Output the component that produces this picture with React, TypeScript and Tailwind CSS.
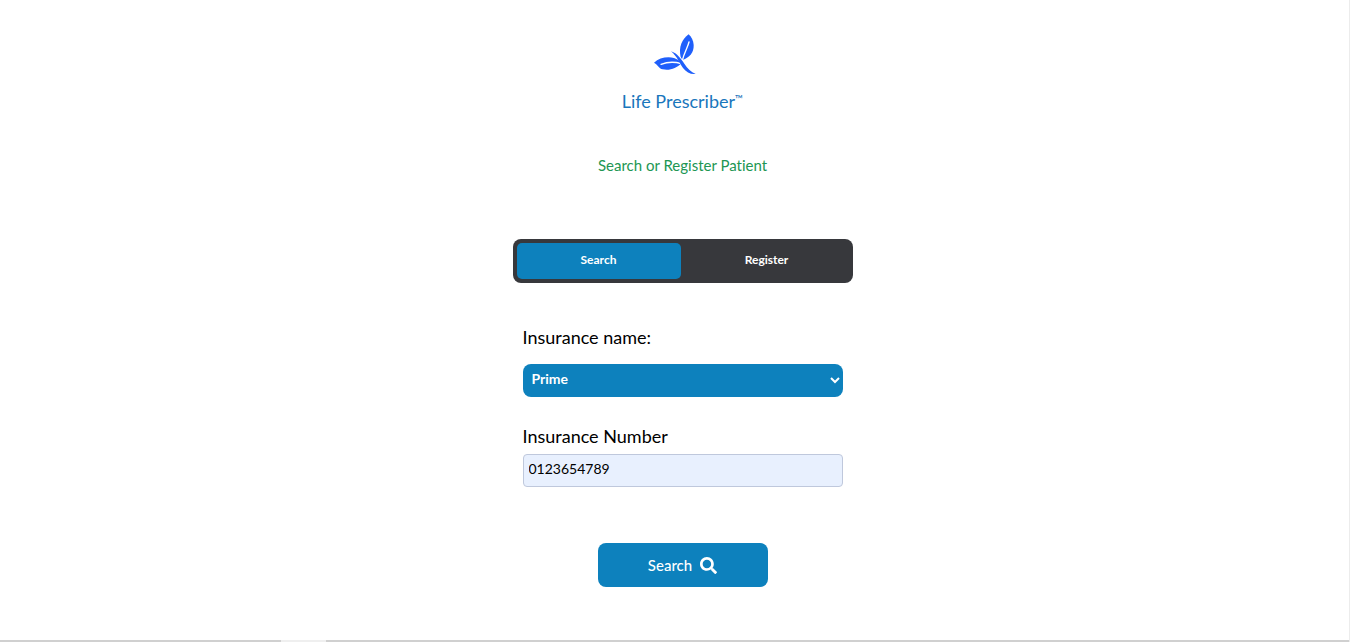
import { useState } from "react";
import { FaSearch } from "react-icons/fa";

function LeafLogo() {
  return (
    <svg viewBox="33 18 174 126" className="h-[42px] w-[58px]" role="img" aria-label="Life Prescriber">
      <g fill="#1f5ffb">
        <path d="M137 19C117 34 106 57 113 87L118 96C141 87 153 73 152 50C151 38 146 27 137 19Z" />
        <path d="M33 104C48 90 72 85 93 90C103 93 110 98 115 106C101 121 79 129 59 124C47 121 43 108 33 104Z" />
      </g>
      <g fill="none" stroke="#ffffff" strokeLinecap="round">
        <path d="M138 42C134 59 124 72 118 97" strokeWidth="4" />
        <path d="M54 109C75 101 95 101 115 107" strokeWidth="4" />
        <path d="M94 76C106 84 115 98 122 107" strokeWidth="8" />
      </g>
      <path
        fill="#1f5ffb"
        d="M84 70C103 76 114 93 124 107C134 122 144 132 158 138C143 140 130 132 120 120C109 105 103 86 84 70Z"
      />
    </svg>
  );
}

const tabs = ["Search", "Register"];

export default function App() {
  const [tab, setTab] = useState("Search");
  const [number, setNumber] = useState("0123654789");

  return (
    <div className="flex min-h-screen flex-col border-r border-[#ececec] bg-white font-['Lato',sans-serif] text-black [font-variant-ligatures:none]">
      <main className="flex flex-1 flex-col items-center pt-[34px] pb-12 pl-4">
        <LeafLogo />
        <h1 className="mt-[11px] flex items-start text-lg leading-7 text-[#1976bc]">
          Life Prescriber<span className="text-[11px] leading-6">™</span>
        </h1>
        <p className="mt-10 text-[15px] leading-5 text-[#219653]">Search or Register Patient</p>

        <div role="tablist" className="mt-16 flex h-11 w-full max-w-[340px] gap-1 rounded-lg bg-[#37383c] p-1">
          {tabs.map((name) => (
            <button
              key={name}
              type="button"
              role="tab"
              aria-selected={tab === name}
              onClick={() => setTab(name)}
              className={
                tab === name
                  ? "flex-1 rounded-[5px] bg-[#0d81bd] pb-0.5 text-xs font-bold text-white"
                  : "flex-1 rounded-[5px] pb-0.5 text-xs font-bold text-white"
              }
            >
              {name}
            </button>
          ))}
        </div>

        <form className="mt-[42px] flex w-full max-w-[320px] flex-col" onSubmit={(e) => e.preventDefault()}>
          <label htmlFor="insurance" className="text-lg leading-6">
            Insurance name:
          </label>
          <select
            id="insurance"
            className="mt-[15px] h-[33px] rounded-lg bg-[#0d81bd] px-[5px] pb-1 text-sm font-bold text-white"
          >
            <option>Prime</option>
          </select>
          <label htmlFor="number" className="mt-[27px] text-lg leading-6">
            Insurance Number
          </label>
          <input
            id="number"
            type="text"
            value={number}
            onChange={(e) => setNumber(e.target.value)}
            className="mt-1.5 h-[33px] rounded border border-[#bfc8dc] bg-[#e8f0fe] px-[5px] pb-1 text-sm"
          />
          <button
            type="submit"
            className="mt-14 flex h-11 w-[170px] items-center justify-center gap-2 self-center rounded-lg bg-[#0d81bd] text-[15px] font-medium text-white"
          >
            Search
            <FaSearch className="size-[17px]" aria-hidden="true" />
          </button>
        </form>
      </main>
      <footer className="flex h-0.5 bg-[#d0d0d0]">
        <div className="ml-[281px] w-[45px] bg-[#efefef]" />
      </footer>
    </div>
  );
}
